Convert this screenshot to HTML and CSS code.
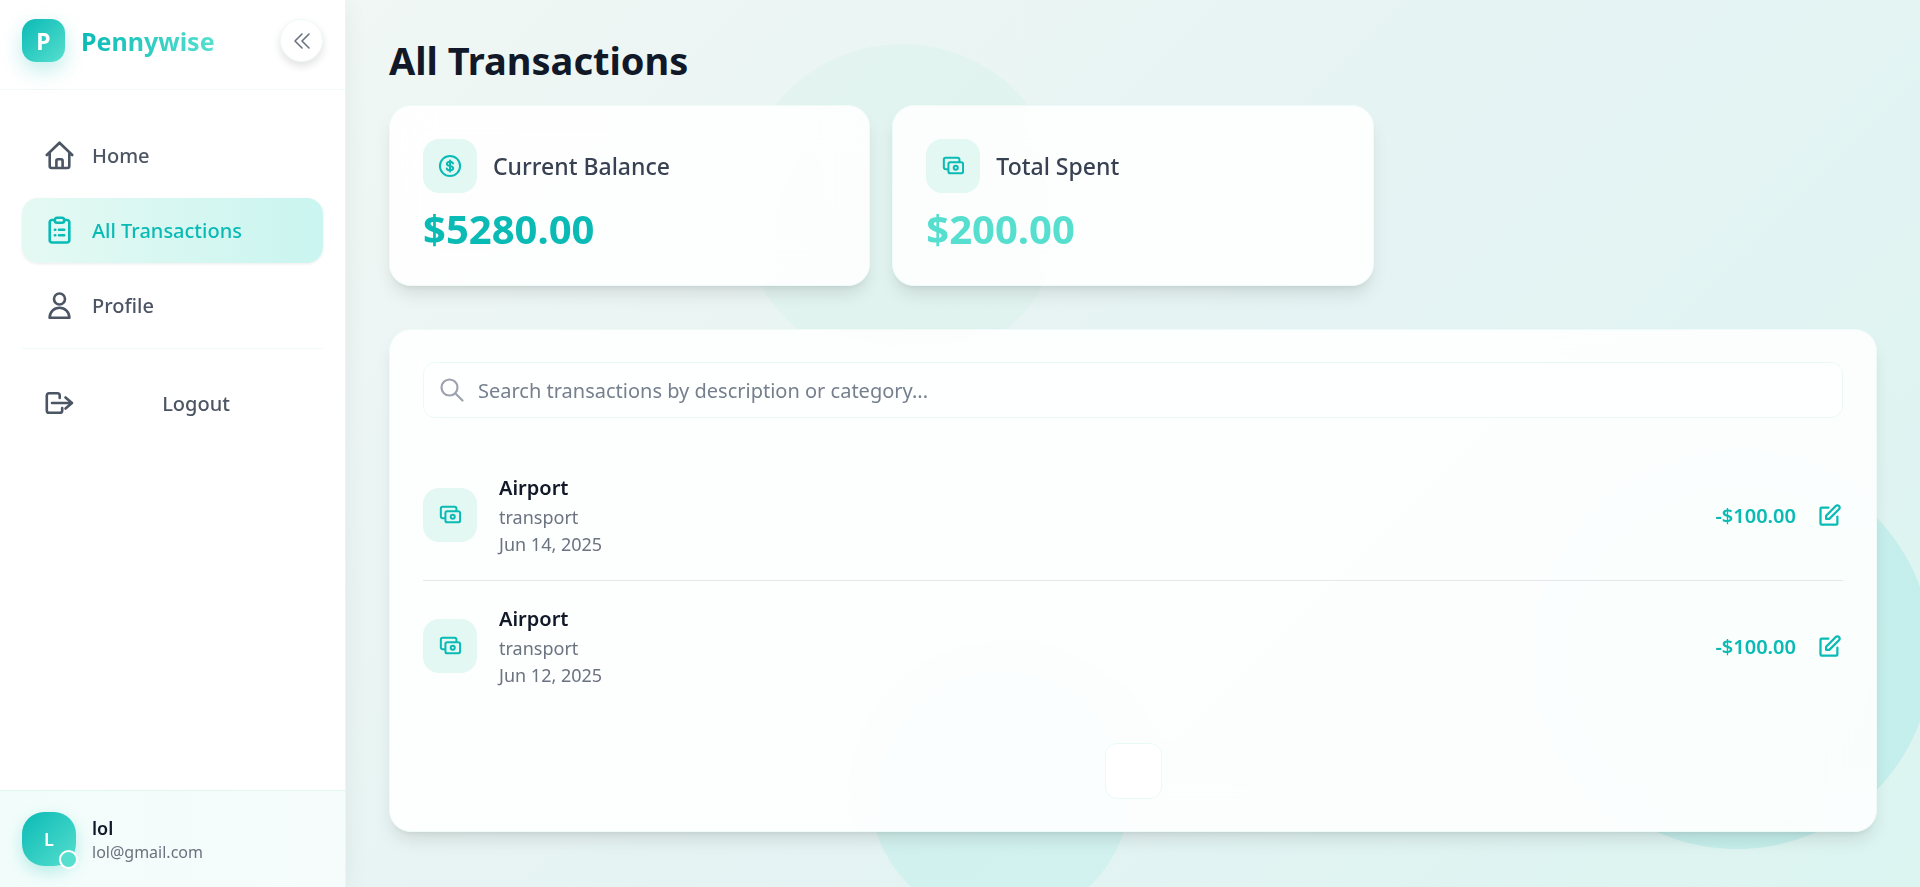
FILE: index.html
```html
<!DOCTYPE html>
<html lang="en">
<head>
<meta charset="utf-8">
<meta name="viewport" content="width=device-width, initial-scale=1">
<title>Pennywise</title>
<link rel="stylesheet" href="styles.css">
</head>
<body>
<svg class="sprite" aria-hidden="true">
  <symbol id="cash" viewBox="0 0 24 24"><path d="M6 15.500H4a2 2 0 0 1-2-2V5a2 2 0 0 1 2-2h13a2 2 0 0 1 2 2v2"/><rect x="7" y="8" width="16" height="12" rx="2"/><circle cx="15" cy="14" r="2.200"/></symbol>
  <symbol id="edit" viewBox="0 0 24 24"><path d="M11 5H5a1 1 0 0 0-1 1v13a1 1 0 0 0 1 1h13a1 1 0 0 0 1-1v-6"/><path d="M17.586 3.586a2 2 0 1 1 2.828 2.828L11.828 15H9v-2.828l8.586-8.586z"/></symbol>
</svg>
<div class="app">
  <aside class="sidebar">
    <header class="brand">
      <span class="logo">P</span>
      <span class="brand-name">Pennywise</span>
      <button class="collapse" type="button" aria-label="Collapse sidebar">
        <svg viewBox="0 0 22 22"><path d="M11 4 4 11l7 7M18 4l-7 7 7 7"/></svg>
      </button>
    </header>
    <nav class="nav">
      <a class="nav-item" href="#home">
        <svg viewBox="0 0 29 29"><path d="M1.800 14 14.500 1.700 27.200 14M4.700 12.500v12.500q0 2 2 2h15.600q2 0 2-2V12.500M11.400 26.500v-6.700q0-1.500 1.500-1.500h3.200q1.500 0 1.500 1.500v6.700"/></svg>
        <span>Home</span>
      </a>
      <a class="nav-item active" href="#transactions" aria-current="page">
        <svg viewBox="0 0 29 29"><path d="M9.500 4H7a2.300 2.300 0 0 0-2.300 2.300v17.900A2.300 2.300 0 0 0 7 26.500h15a2.300 2.300 0 0 0 2.300-2.300V6.300A2.300 2.300 0 0 0 22 4h-2.500"/><rect x="9.800" y="1.800" width="9.400" height="5" rx="2.300"/><path d="M9.900 13.700h.4M14 13.700h5.200M9.900 19.300h.4M14 19.300h5.200"/></svg>
        <span>All Transactions</span>
      </a>
      <a class="nav-item" href="#profile">
        <svg viewBox="0 0 29 29"><circle cx="14.500" cy="8" r="5.500"/><path d="M4.600 26.700a9.900 10 0 0 1 19.800 0z"/></svg>
        <span>Profile</span>
      </a>
      <div class="nav-end">
        <button class="nav-item logout" type="button">
          <svg viewBox="0 0 29 29"><path d="M14.700 9V6.600q0-2.300-2.300-2.300H4.100Q1.800 4.300 1.800 6.600v14.800q0 2.300 2.300 2.300h10.800q2.300 0 2.300-2.300V19M7 14h20M20.500 8.500 27 14l-6.500 5.500"/></svg>
          <span>Logout</span>
        </button>
      </div>
    </nav>
    <footer class="user">
      <div class="avatar">L<span class="status"></span></div>
      <div class="user-text"><strong>lol</strong><span>lol@gmail.com</span></div>
    </footer>
  </aside>
  <main class="main">
    <div class="bubbles" aria-hidden="true"><i class="bubble one"></i><i class="bubble two"></i><i class="bubble three"></i></div>
    <h1>All Transactions</h1>
    <section class="cards">
      <article class="card">
        <div class="card-head">
          <span class="tile"><svg viewBox="0 0 24 24"><circle cx="12" cy="12" r="11"/><path d="M15.300 9.200C15 8 13.800 7.300 12 7.300c-2 0-3.400.9-3.400 2.400 0 3.300 6.800 1.300 6.800 4.600 0 1.500-1.400 2.400-3.400 2.400-1.900 0-3.200-.8-3.500-2M12 6v12"/></svg></span>
          <h2>Current Balance</h2>
        </div>
        <p class="total">$5280.00</p>
      </article>
      <article class="card">
        <div class="card-head">
          <span class="tile"><svg><use href="#cash"/></svg></span>
          <h2>Total Spent</h2>
        </div>
        <p class="total light">$200.00</p>
      </article>
    </section>
    <section class="panel">
      <label class="search">
        <svg viewBox="0 0 24 24"><circle cx="9.500" cy="9.500" r="8"/><path d="m15.500 15.500 7 7"/></svg>
        <input type="text" aria-label="Search transactions" placeholder="Search transactions by description or category...">
      </label>
      <ul class="list">
        <li class="row">
          <span class="tile"><svg><use href="#cash"/></svg></span>
          <div class="info"><strong>Airport</strong><span>transport</span><span>Jun 14, 2025</span></div>
          <span class="amount">-$100.00</span>
          <button class="edit" type="button" aria-label="Edit transaction"><svg><use href="#edit"/></svg></button>
        </li>
        <li class="row">
          <span class="tile"><svg><use href="#cash"/></svg></span>
          <div class="info"><strong>Airport</strong><span>transport</span><span>Jun 12, 2025</span></div>
          <span class="amount">-$100.00</span>
          <button class="edit" type="button" aria-label="Edit transaction"><svg><use href="#edit"/></svg></button>
        </li>
      </ul>
      <div class="pager"><button class="page" type="button" aria-label="Page"></button></div>
    </section>
  </main>
</div>
</body>
</html>
```
FILE: styles.css
```css
* { box-sizing: border-box; }
body {
  margin: 0;
  font-family: "Segoe UI", "Noto Sans", "Open Sans", sans-serif;
  font-size: 20px;
  color: #111827;
}
h1, h2, p, ul { margin: 0; padding: 0; }
button { font: inherit; border: 0; background: none; padding: 0; cursor: pointer; }
svg { display: block; flex: none; fill: none; stroke: currentColor; stroke-width: 2; stroke-linecap: round; stroke-linejoin: round; }
.sprite { position: absolute; width: 0; height: 0; }

.app { display: flex; min-height: 100vh; }

.sidebar {
  flex: none;
  width: 346px;
  display: flex;
  flex-direction: column;
  background: #fff;
  border-right: 1px solid #e6f7f4;
  box-shadow: 0 4px 24px rgba(0, 0, 0, .06);
  z-index: 1;
}
.brand {
  display: flex;
  align-items: center;
  gap: 16px;
  padding: 19px 22px 27px;
  border-bottom: 1px solid #effbf8;
}
.logo {
  width: 43px;
  height: 43px;
  display: grid;
  place-items: center;
  border-radius: 14px;
  background: linear-gradient(135deg, #0abab5, #56dfcf);
  box-shadow: 0 8px 20px rgba(10, 186, 181, .25);
  color: #fff;
  font-size: 23px;
  font-weight: 700;
}
.brand-name {
  font-size: 25px;
  font-weight: 700;
  line-height: 36px;
  color: transparent;
  background: linear-gradient(90deg, #0abab5, #56dfcf);
  -webkit-background-clip: text;
  background-clip: text;
}
.collapse {
  margin-left: auto;
  width: 43px;
  height: 43px;
  display: grid;
  place-items: center;
  border: 1px solid #effbf8;
  border-radius: 50%;
  background: #fff;
  box-shadow: 0 4px 8px rgba(0, 0, 0, .12);
  color: #6b7280;
}
.collapse svg { width: 22px; height: 22px; stroke-width: 1.6; }

.nav { flex: 1; display: flex; flex-direction: column; gap: 10px; padding: 33px 22px; }
.nav-item {
  display: flex;
  align-items: center;
  gap: 18px;
  min-height: 65px;
  padding: 0 23px;
  border-radius: 16px;
  color: #4b5563;
  font-weight: 500;
  text-decoration: none;
}
.nav-item svg { width: 29px; height: 29px; stroke-width: 2.6; }
.nav-item.active {
  color: #0abab5;
  background: linear-gradient(90deg, #e5f9f3, #caf5f0);
  box-shadow: 0 1px 3px rgba(0, 0, 0, .08);
}
.nav-end { border-top: 1px solid #effbf8; padding-top: 22px; }
.logout { width: 100%; }
.logout span { flex: 1; text-align: center; }

.user {
  display: flex;
  align-items: center;
  gap: 16px;
  padding: 21px 22px;
  border-top: 1px solid #def8f0;
  background: linear-gradient(90deg, #f2fdfb, #f6fcfc);
}
.avatar {
  position: relative;
  width: 54px;
  height: 54px;
  display: grid;
  place-items: center;
  border-radius: 22px;
  background: linear-gradient(135deg, #0abab5, #56dfcf);
  box-shadow: 0 6px 16px rgba(10, 186, 181, .25);
  color: #fff;
  font-size: 18px;
  font-weight: 600;
}
.status {
  position: absolute;
  right: -2px;
  bottom: -3px;
  width: 19px;
  height: 19px;
  border: 2px solid #fff;
  border-radius: 50%;
  background: #56dfcf;
}
.user-text { display: flex; flex-direction: column; line-height: 24px; padding-top: 2px; }
.user-text strong { font-size: 18px; font-weight: 600; }
.user-text span { font-size: 16px; color: #6b7280; }

.main {
  position: relative;
  flex: 1;
  min-width: 0;
  padding: 32px 43px 43px;
  background: linear-gradient(135deg, #f0f7f4 0%, #e5f3f3 50%, #dcf5f1 100%);
}
.bubbles { position: absolute; inset: 0; overflow: hidden; }
.bubble { position: absolute; border-radius: 50%; }
.bubble.one { left: 25%; top: 5%; width: 324px; height: 324px; background: rgba(210, 243, 233, .3); }
.bubble.two { right: -12px; bottom: 38px; width: 390px; height: 390px; background: rgba(140, 225, 222, .3); }
.bubble.three { left: 524px; bottom: -35px; width: 260px; height: 260px; background: rgba(170, 240, 230, .3); }

h1 { position: relative; font-size: 38px; line-height: 57px; font-weight: 700; margin-bottom: 16px; }
.cards { position: relative; display: grid; grid-template-columns: repeat(3, 1fr); gap: 22px; margin-bottom: 43px; }
.card, .panel {
  border: 1px solid #effbf8;
  border-radius: 22px;
  background: rgba(255, 255, 255, .9);
  -webkit-backdrop-filter: blur(20px);
  backdrop-filter: blur(20px);
  box-shadow: 0 11px 17px -3px rgba(0, 0, 0, .1), 0 4px 7px -4px rgba(0, 0, 0, .1);
}
.card { padding: 33px 33px 31px; }
.card-head { display: flex; align-items: center; gap: 16px; margin-bottom: 11px; }
.card h2 { font-size: 23px; line-height: 32px; font-weight: 500; color: #374151; }
.tile {
  flex: none;
  width: 54px;
  height: 54px;
  display: grid;
  place-items: center;
  border-radius: 16px;
  background: #e3f8f3;
  color: #0abab5;
}
.tile svg { width: 22px; height: 22px; stroke-width: 2.2; overflow: visible; }
.total { font-size: 40px; line-height: 50px; font-weight: 700; color: #0abab5; }
.total.light { color: #56dfcf; }

.panel { position: relative; padding: 32px 33px; }
.search {
  display: flex;
  align-items: center;
  gap: 14px;
  height: 56px;
  padding: 0 16px;
  border: 1px solid #e9faf6;
  border-radius: 12px;
  background: rgba(255, 255, 255, .5);
  color: #9ca3af;
}
.search svg { width: 24px; height: 24px; stroke-width: 2.2; }
.search input { flex: 1; min-width: 0; border: 0; padding: 0; outline: 0; background: none; font: inherit; color: #111827; }
.search input::placeholder { color: #757f8d; opacity: 1; }

.list { list-style: none; margin-top: 32px; }
.row { display: flex; align-items: center; padding: 22px 0; }
.row + .row { border-top: 1px solid #e5e7eb; }
.info { flex: 1; display: flex; flex-direction: column; margin-left: 22px; font-size: 18px; line-height: 27px; color: #6b7280; }
.info strong { font-size: 20px; line-height: 32px; font-weight: 600; color: #111827; }
.amount { font-weight: 600; color: #0abab5; }
.edit { margin-left: 20px; color: #0abab5; }
.edit svg { width: 27px; height: 27px; }
.pager { display: flex; justify-content: center; margin-top: 32px; }
.page { width: 57px; height: 56px; border: 1px solid #e9faf6; border-radius: 12px; background: #fff; }
```
